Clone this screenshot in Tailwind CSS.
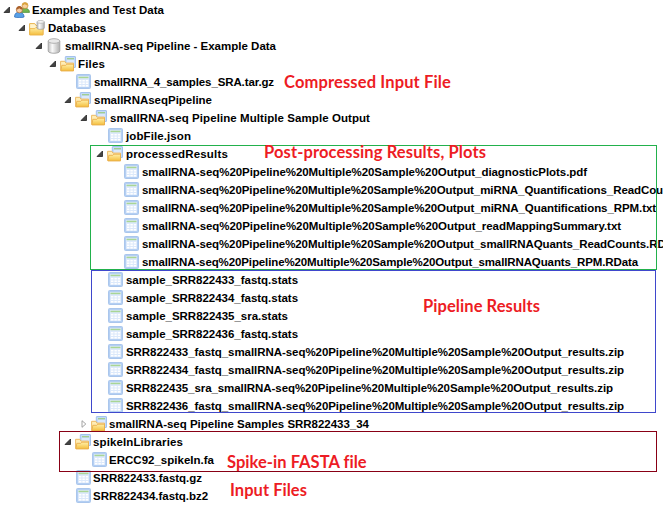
<!DOCTYPE html>
<html lang="en">
<head>
<meta charset="utf-8">
<title>Examples and Test Data</title>
<script src="https://cdn.jsdelivr.net/npm/@tailwindcss/browser@4"></script>
</head>
<body class="bg-white">
<svg class="absolute size-0">
  <defs>
    <linearGradient id="gold" x2="0" y2="1"><stop stop-color="#fff0a8"/><stop offset="1" stop-color="#f4bd3d"/></linearGradient>
    <linearGradient id="metal"><stop stop-color="#bcbcbc"/><stop offset=".35" stop-color="#fafafa"/><stop offset="1" stop-color="#b0b0b0"/></linearGradient>
    <symbol id="open" viewBox="0 0 8 8"><path d="M6.5 1v5.5H1z" fill="#444" stroke="#222" stroke-width=".8"/></symbol>
    <symbol id="closed" viewBox="0 0 8 8"><path d="M2 .7v6.6L5.8 4z" fill="#fff" stroke="#999" stroke-width=".9"/></symbol>
    <symbol id="table" viewBox="0 0 16 16"><rect x=".5" y=".5" width="14" height="14" rx="1" fill="#b4cff3" stroke="#aac6ec"/><path d="M2 2h11v11H2z" fill="#dce9fb"/><path d="M2.5 2.7h10v1.5h-10z" fill="#a9d695"/><path d="M3 6h2.4v1.6H3zM6.4 6h2.4v1.6H6.4zM9.8 6h2.4v1.6H9.8zM3 8.5h2.4v1.6H3zM6.4 8.5h2.4v1.6H6.4zM9.8 8.5h2.4v1.6H9.8zM3 11h2.4v1.6H3zM6.4 11h2.4v1.6H6.4zM9.8 11h2.4v1.6H9.8z" fill="#fff"/></symbol>
    <symbol id="folder" viewBox="0 0 16 16"><rect x="5.3" y=".5" width="10.2" height="11" rx=".5" fill="#c3daf8" stroke="#a3c2ec"/><path d="M7 2.7h7" stroke="#9dce83" stroke-width="1.2"/><path d="M7 5h7M7 7h7" stroke="#f0f6ff" stroke-width="1"/><path d="M.6 14.6V5.3h4.2l1.1 1.8h7.6v7.5z" fill="#ffedb5" stroke="#edbb65"/><path d="M1 14.9 1.8 9.3h4l1-1.1h6.7v6.7z" fill="url(#gold)" stroke="#e9ae4b" stroke-width=".9"/></symbol>
    <symbol id="dbfolder" viewBox="0 0 16 16"><path d="M.6 14.7V3.6h5.2L7 5.5h7v9.2z" fill="#fff3ca" stroke="#e9b44f"/><path d="M.8 14.9V8.6h5l1-1.1H14v7.4z" fill="url(#gold)" stroke="#edb74c" stroke-width=".9"/><path d="M8 1.9v6.2c0 1.6 7.3 1.6 7.3 0V1.9z" fill="url(#metal)" stroke="#999" stroke-width=".7"/><ellipse cx="11.65" cy="1.9" rx="3.65" ry="1.4" fill="#f6f6f6" stroke="#aaa" stroke-width=".7"/></symbol>
    <symbol id="db" viewBox="0 0 16 16"><path d="M2.2 3v10c0 3 11.6 3 11.6 0V3z" fill="url(#metal)" stroke="#a2a2a2" stroke-width=".9"/><ellipse cx="8" cy="3" rx="5.8" ry="2.3" fill="#e9e9e9" stroke="#aaa" stroke-width=".9"/></symbol>
    <symbol id="users" viewBox="0 0 16 16"><path d="M6 10.4c0-3 1.5-4.3 4.4-4.3s5.1 1.6 5.1 4.3z" fill="#72b650" stroke="#4b8b33" stroke-width=".7"/><circle cx="11" cy="3.6" r="3" fill="#f7d09d" stroke="#c89137" stroke-width=".7"/><path d="M8 3.4C8-.5 14-.5 14 3.4 12.3 3.2 11.5 2.7 10.7 2 10 3 9 3.3 8 3.4z" fill="#d9a33c"/><path d="M.5 15c0-3.4 1.6-4.7 4.6-4.7s5 1.5 5 4.7c-2 1-7.6 1-9.6 0z" fill="#58a0e6" stroke="#2d68b4" stroke-width=".7"/><circle cx="5.4" cy="7.8" r="3.1" fill="#f8cda5" stroke="#a96835" stroke-width=".7"/><path d="M2.3 7.6c-.2-4.7 6.4-4.7 6.2 0C7 7.4 6 6.9 5.2 6.2 4.5 7.1 3.4 7.5 2.3 7.6z" fill="#a9602b"/></symbol>
  </defs>
</svg>
<main class="relative h-[510px] w-[663px] overflow-hidden bg-white">
  <div id="tree" class="flex flex-col pt-[0.6px] font-['Liberation_Sans',Arial,sans-serif] text-[11.5px] leading-[18px] font-bold text-black"></div>
  <div class="absolute left-[90px] top-[145px] h-[125px] w-[567px] border border-[#22b14c]"></div>
  <div class="absolute left-[91px] top-[270px] h-[143px] w-[565px] border border-[#3f48cc]"></div>
  <div class="absolute left-[59px] top-[431px] h-[41px] w-[598px] border border-[#880015]"></div>
  <div id="notes" class="font-[Lato,'Open_Sans',sans-serif] text-[16.5px] leading-5 font-bold text-[#ed1c24]">
    <span class="absolute left-[284px] top-[72px] whitespace-pre" data-w="167">Compressed Input File</span>
    <span class="absolute left-[264px] top-[142px] whitespace-pre" data-w="222">Post-processing Results, Plots</span>
    <span class="absolute left-[423px] top-[296px] whitespace-pre" data-w="117">Pipeline Results</span>
    <span class="absolute left-[227px] top-[452px] whitespace-pre" data-w="140">Spike-in FASTA file</span>
    <span class="absolute left-[230px] top-[480px] whitespace-pre" data-w="77">Input Files</span>
  </div>
</main>
<script>
// indent of the icon, icon, arrow, label offset, label, label width
const out = 'smallRNA-seq%20Pipeline%20Multiple%20Sample%20Output_';
const zip = '_smallRNA-seq%20Pipeline%20Multiple%20Sample%20Output_results.zip';
const rows = [
  [14,'users','open',32,'Examples and Test Data',132],
  [29,'dbfolder','open',48,'Databases',58],
  [46,'db','open',65,'smallRNA-seq Pipeline - Example Data',211],
  [60,'folder','open',78,'Files',27],
  [76,'table','',94,'smallRNA_4_samples_SRA.tar.gz',180],
  [75,'folder','open',94,'smallRNAseqPipeline',118],
  [91,'folder','open',110,'smallRNA-seq Pipeline Multiple Sample Output',260],
  [108,'table','',126,'jobFile.json',65],
  [107,'folder','open',126,'processedResults',102],
  [124,'table','',142,out+'diagnosticPlots.pdf',445],
  [124,'table','',142,out+'miRNA_Quantifications_ReadCounts.txt',555],
  [124,'table','',142,out+'miRNA_Quantifications_RPM.txt',514],
  [124,'table','',142,out+'readMappingSummary.txt',479],
  [124,'table','',142,out+'smallRNAQuants_ReadCounts.RData',540],
  [124,'table','',142,out+'smallRNAQuants_RPM.RData',496],
  [108,'table','',126,'sample_SRR822433_fastq.stats',172],
  [108,'table','',126,'sample_SRR822434_fastq.stats',172],
  [108,'table','',126,'sample_SRR822435_sra.stats',162],
  [108,'table','',126,'sample_SRR822436_fastq.stats',172],
  [108,'table','',126,'SRR822433_fastq'+zip,498],
  [108,'table','',126,'SRR822434_fastq'+zip,498],
  [108,'table','',126,'SRR822435_sra'+zip,487],
  [108,'table','',126,'SRR822436_fastq'+zip,498],
  [91,'folder','closed',109,'smallRNA-seq Pipeline Samples SRR822433_34',260],
  [75,'folder','open',93,'spikeInLibraries',90],
  [92,'table','',109,'ERCC92_spikeIn.fa',105],
  [76,'table','',93,'SRR822433.fastq.gz',109],
  [76,'table','',93,'SRR822434.fastq.bz2',115],
];
const pen = document.createElement('canvas').getContext('2d');
const tracking = (label, w, font) => {
  pen.font = font;
  return ((w - pen.measureText(label).width) / label.length).toFixed(3) + 'px';
};
document.getElementById('tree').innerHTML = rows.map(([x, icon, arrow, tx, label, w]) =>
  `<div class="flex h-[18px] shrink-0 items-center whitespace-pre" style="padding-left:${x - 11}px">
    <svg class="mr-[3px] size-2 shrink-0">${arrow ? `<use href="#${arrow}"/>` : ''}</svg>
    <svg class="size-4 shrink-0"><use href="#${icon}"/></svg>
    <span class="shrink-0" style="margin-left:${tx - x - 16}px;letter-spacing:${tracking(label, w, 'bold 11.5px "Liberation Sans"')}">${label}</span>
  </div>`).join('');
for (const s of document.querySelectorAll('#notes span')) {
  s.style.letterSpacing = tracking(s.textContent, +s.dataset.w, 'bold 16.5px Lato');
}
</script>
</body>
</html>
